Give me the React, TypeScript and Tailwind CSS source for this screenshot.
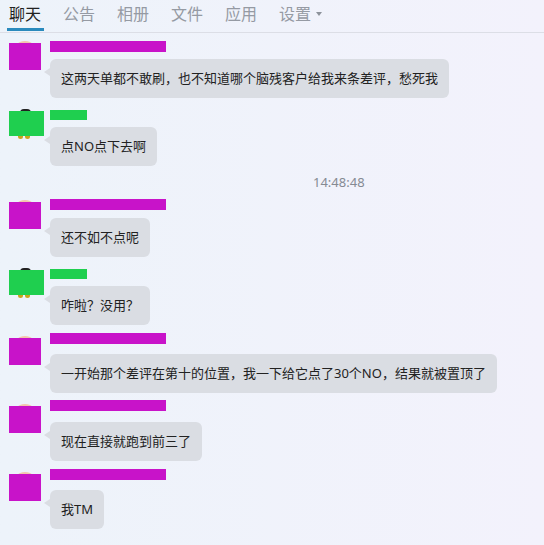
import React from "react";

type Msg = {
  who: "pink" | "green";
  text: string;
  mt: number;
  gap: number;
  av: number;
};

const font = { fontFamily: '"Noto Sans", "Noto Sans CJK SC", sans-serif' };

const tabs = ["聊天", "公告", "相册", "文件", "应用", "设置"];

const mtCls: Record<number, string> = {
  0: "mt-0",
  7: "mt-[7px]",
  8: "mt-[8px]",
  12: "mt-[12px]",
};
const gapCls: Record<number, string> = {
  7: "mt-[7px]",
  8: "mt-[8px]",
  10: "mt-[10px]",
  11: "mt-[11px]",
};
const avCls: Record<number, string> = {
  1: "mt-[1px]",
  2: "mt-[2px]",
  3: "mt-[3px]",
  5: "mt-[5px]",
  6: "mt-[6px]",
};

const Avatar = ({ who, av }: { who: Msg["who"]; av: number }) =>
  who === "pink" ? (
    <div className={`relative h-[27px] w-[32px] ${avCls[av]}`}>
      <div className="absolute -top-[2px] left-[3px] h-[28px] w-[26px] rounded-full bg-[#f3c6ad]" />
      <div className="absolute inset-0 bg-[#c813c9]" />
    </div>
  ) : (
    <div className={`relative h-[25px] w-[35px] ${avCls[av]}`}>
      <div className="absolute -top-[2px] left-[11px] h-[4px] w-[11px] rounded-t-full bg-[#222]" />
      <div className="absolute -bottom-[3px] left-[9px] h-[4px] w-[5px] rounded-b-full bg-[#c9a51c]" />
      <div className="absolute -bottom-[3px] left-[16px] h-[4px] w-[5px] rounded-b-full bg-[#c9a51c]" />
      <div className="absolute inset-0 bg-[#1fcf4f]" />
    </div>
  );

const Message = ({ m }: { m: Msg }) => (
  <div className={`flex ${mtCls[m.mt]}`}>
    <div className="w-[50px] pl-[9px]">
      <Avatar who={m.who} av={m.av} />
    </div>
    <div className="flex flex-col items-start">
      {m.who === "pink" ? (
        <div className="h-[11px] w-[116px] bg-[#c813c9]" />
      ) : (
        <div className="h-[10px] w-[37px] bg-[#1fcf4f]" />
      )}
      <div
        className={`relative ${gapCls[m.gap]} rounded-[6px] bg-[#dadde3] px-[11px] py-[10px] text-[13px] leading-[19px] text-[#222]`}
      >
        <span className="absolute -left-[6px] top-[9px] h-0 w-0 border-y-[4px] border-r-[6px] border-y-transparent border-r-[#dadde3]" />
        {m.text}
      </div>
    </div>
  </div>
);

const before: Msg[] = [
  { who: "pink", text: "这两天单都不敢刷，也不知道哪个脑残客户给我来条差评，愁死我", mt: 8, gap: 7, av: 2 },
  { who: "green", text: "点NO点下去啊", mt: 12, gap: 7, av: 1 },
];

const after: Msg[] = [
  { who: "pink", text: "还不如不点呢", mt: 0, gap: 8, av: 3 },
  { who: "green", text: "咋啦？没用？", mt: 12, gap: 7, av: 1 },
  { who: "pink", text: "一开始那个差评在第十的位置，我一下给它点了30个NO，结果就被置顶了", mt: 8, gap: 10, av: 5 },
  { who: "pink", text: "现在直接就跑到前三了", mt: 7, gap: 11, av: 6 },
  { who: "pink", text: "我TM", mt: 8, gap: 10, av: 5 },
];

export default function App() {
  return (
    <div
      className="h-[545px] w-full overflow-hidden bg-linear-to-r from-[#edf3fa] to-[#f3f2fc]"
      style={font}
    >
      {/* tabs */}
      <div className="flex h-[33px] items-stretch gap-[22px] border-b border-[#dcdee6] pl-[9px]">
        {tabs.map((t, i) => (
          <div key={t} className="relative flex items-center pb-[4px]">
            <span
              className={`text-[16px] leading-none ${i === 0 ? "text-[#222]" : "text-[#959aa3]"}`}
            >
              {t}
            </span>
            {i === 5 && (
              <span className="ml-[5px] h-0 w-0 border-x-[3px] border-t-[4px] border-x-transparent border-t-[#8d929b]" />
            )}
            {i === 0 && (
              <span className="absolute -left-[2px] -right-[3px] bottom-[1px] h-[3px] bg-[#2a8abd]" />
            )}
          </div>
        ))}
      </div>

      {before.map((m, i) => (
        <Message key={i} m={m} />
      ))}

      <div className="flex h-[33px] items-center pl-[313px] text-[13px] text-[#858a93]">
        14:48:48
      </div>

      {after.map((m, i) => (
        <Message key={i} m={m} />
      ))}
    </div>
  );
}
